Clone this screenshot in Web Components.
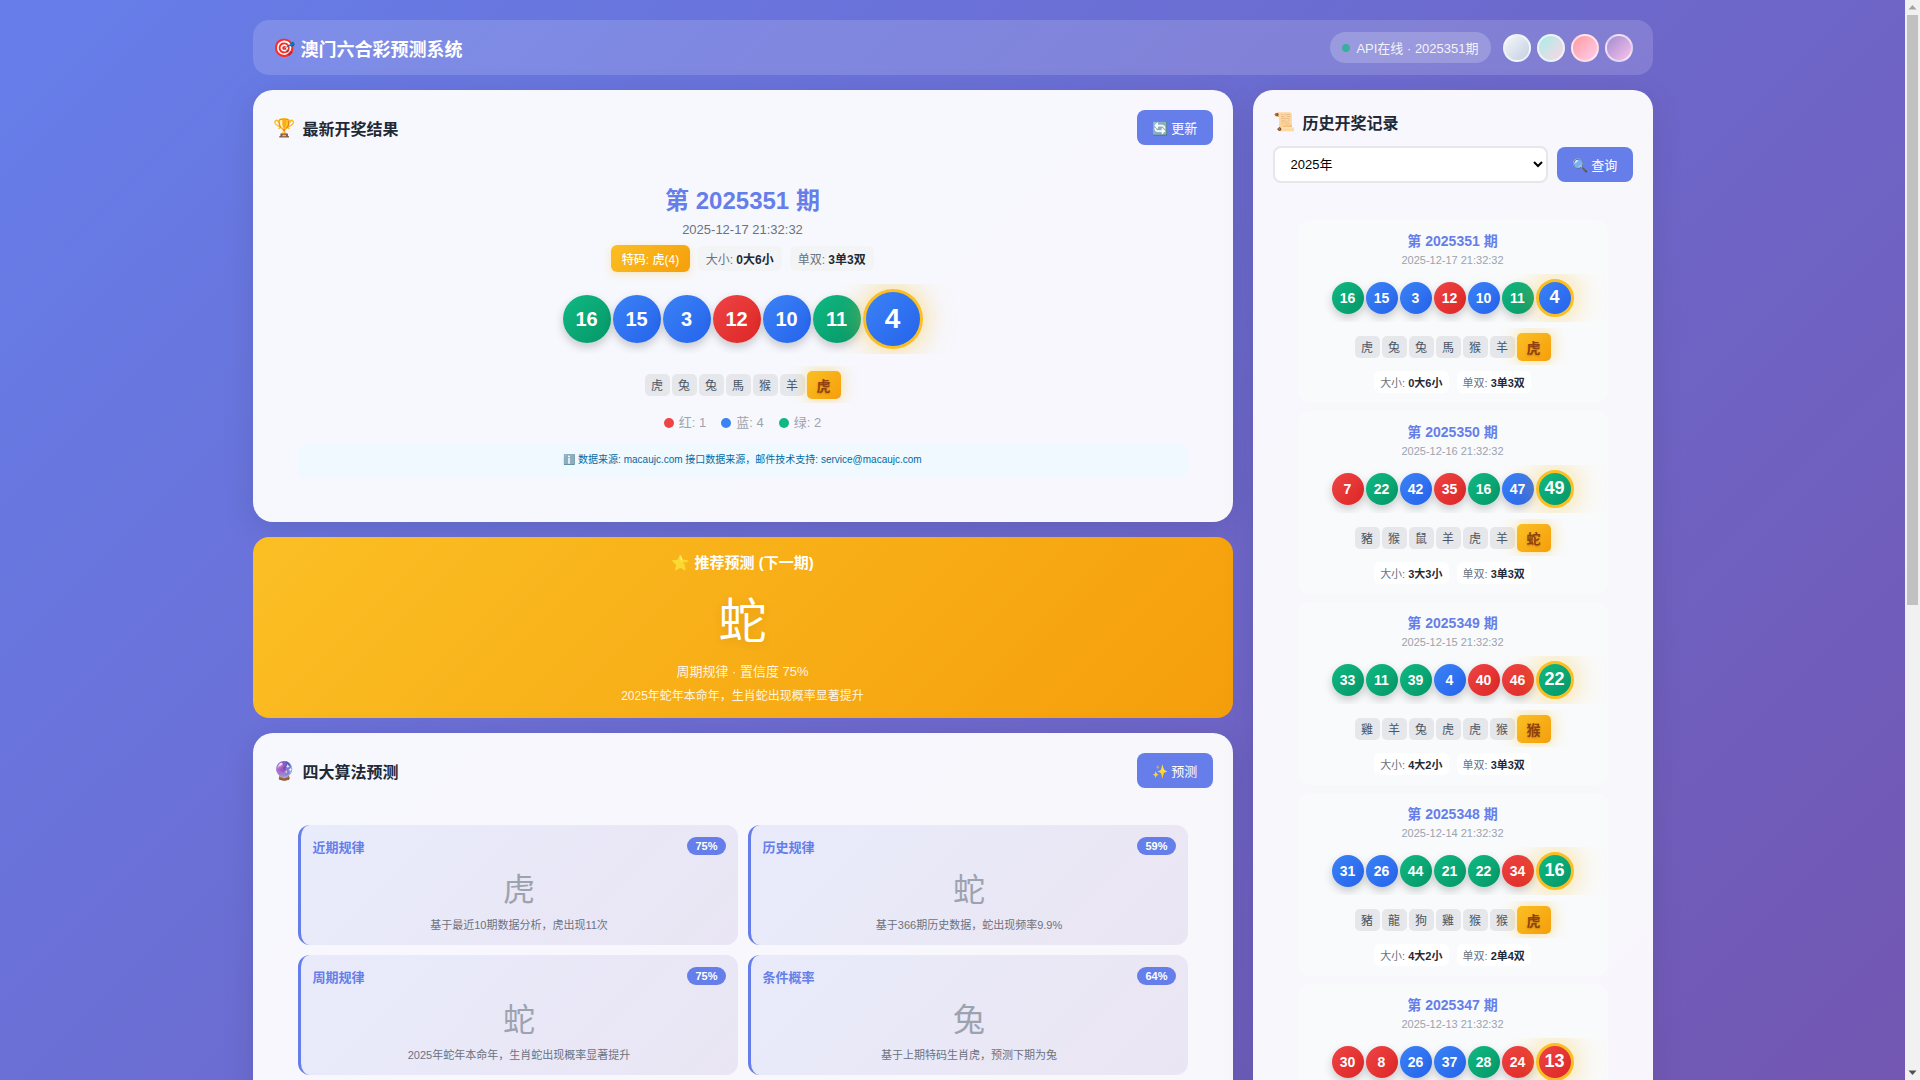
<!DOCTYPE html>
<html lang="zh-CN">
<head>
<meta charset="utf-8">
<title>澳门六合彩预测系统</title>
<style>
  html, body { margin: 0; padding: 0; }
  body {
    /* full document height, the gradient runs over all of it */
    box-sizing: border-box;
    min-height: 1921px;
    padding-right: 15px;
    background: linear-gradient(135deg, #667eea 0%, #764ba2 100%);
    font-family: "Liberation Sans", "Noto Sans CJK SC", sans-serif;
    color: #1f2937;
  }
</style>
</head>
<body>
<lotto-app></lotto-app>
<page-scrollbar></page-scrollbar>

<script>
const RED = [1, 2, 7, 8, 12, 13, 18, 19, 23, 24, 29, 30, 34, 35, 40, 45, 46];
const BLUE = [3, 4, 9, 10, 14, 15, 20, 25, 26, 31, 36, 37, 41, 42, 47, 48];
const waveOf = (n) => (RED.includes(n) ? "red" : BLUE.includes(n) ? "blue" : "green");

const DRAWS = [
  { issue: "2025351", date: "2025-12-17 21:32:32", nums: [16, 15, 3, 12, 10, 11, 4], zodiac: "虎兔兔馬猴羊虎", big: "0大6小", odd: "3单3双" },
  { issue: "2025350", date: "2025-12-16 21:32:32", nums: [7, 22, 42, 35, 16, 47, 49], zodiac: "豬猴鼠羊虎羊蛇", big: "3大3小", odd: "3单3双" },
  { issue: "2025349", date: "2025-12-15 21:32:32", nums: [33, 11, 39, 4, 40, 46, 22], zodiac: "雞羊兔虎虎猴猴", big: "4大2小", odd: "3单3双" },
  { issue: "2025348", date: "2025-12-14 21:32:32", nums: [31, 26, 44, 21, 22, 34, 16], zodiac: "豬龍狗雞猴猴虎", big: "4大2小", odd: "2单4双" },
  { issue: "2025347", date: "2025-12-13 21:32:32", nums: [30, 8, 26, 37, 28, 24, 13], zodiac: "鼠狗龍蛇虎馬蛇", big: "4大2小", odd: "1单5双" },
];

const ballsHtml = (nums, small) =>
  nums
    .map((n, i) => `<lotto-ball wave="${waveOf(n)}" ${small ? "small" : ""} ${i === nums.length - 1 ? "special" : ""}>${n}</lotto-ball>`)
    .join("");

const tilesHtml = (zodiac) =>
  [...zodiac]
    .map((z, i) => `<zodiac-tile ${i === zodiac.length - 1 ? "special" : ""}>${z}</zodiac-tile>`)
    .join("");

// base for elements that only need a static shadow root
class ShadowElement extends HTMLElement {
  render(html) {
    this.attachShadow({ mode: "open" }).innerHTML = html;
  }
}

class LottoBall extends ShadowElement {
  connectedCallback() {
    if (this.shadowRoot) return;
    this.render(`<style>
      :host {
        box-sizing: border-box;
        display: inline-flex;
        flex: none;
        align-items: center;
        justify-content: center;
        width: 48px;
        height: 48px;
        border-radius: 50%;
        color: #fff;
        font-size: 20px;
        font-weight: 700;
        box-shadow: 0 4px 10px rgba(0, 0, 0, 0.2);
      }
      :host([wave="red"]) { background: linear-gradient(135deg, #ef4444, #dc2626); }
      :host([wave="blue"]) { background: linear-gradient(135deg, #3b82f6, #2563eb); }
      :host([wave="green"]) { background: linear-gradient(135deg, #10b981, #059669); }
      :host([small]) { width: 32px; height: 32px; font-size: 14px; }
      :host([special]) {
        width: 60px;
        height: 60px;
        font-size: 28px;
        border: 3px solid #fbbf24;
        box-shadow: 0 0 30px rgba(251, 191, 36, 0.6);
      }
      :host([special][small]) { width: 38px; height: 38px; padding-bottom: 2px; font-size: 18px; }
    </style><slot></slot>`);
  }
}

class ZodiacTile extends ShadowElement {
  connectedCallback() {
    if (this.shadowRoot) return;
    this.render(`<style>
      :host {
        display: inline-flex;
        flex: none;
        align-items: center;
        justify-content: center;
        width: 25px;
        height: 22px;
        border-radius: 5px;
        background: #e5e7eb;
        color: #4b5563;
        font-size: 12px;
      }
      :host([special]) {
        width: 34px;
        height: 28px;
        border-radius: 5px;
        background: linear-gradient(135deg, #fbbf24, #f59e0b);
        color: #92400e;
        font-size: 14px;
        font-weight: 700;
        text-shadow: 0 1px 2px rgba(0, 0, 0, 0.2);
        box-shadow: 0 0 15px rgba(251, 191, 36, 0.5);
      }
    </style><slot></slot>`);
  }
}

class StatTag extends ShadowElement {
  connectedCallback() {
    if (this.shadowRoot) return;
    const label = this.getAttribute("label");
    const value = this.getAttribute("value");
    this.render(`<style>
      :host {
        display: inline-flex;
        align-items: center;
        height: 25px;
        padding: 0 8px;
        border-radius: 6px;
        background: #f3f4f6;
        color: #6b7280;
        font-size: 12px;
        white-space: pre;
      }
      b { color: #1f2937; }
      :host([small]) { height: 22px; padding: 0 6px; background: #fff; font-size: 11px; }
    </style>${label}: <b>${value}</b>`);
  }
}

class AppHeader extends ShadowElement {
  connectedCallback() {
    this.render(`<style>
      :host {
        display: flex;
        align-items: center;
        justify-content: space-between;
        height: 55px;
        padding: 0 20px;
        border-radius: 16px;
        background: rgba(255, 255, 255, 0.15);
        color: #fff;
      }
      h1 { margin: 0; font-size: 18px; font-weight: 600; display: flex; gap: 6px; align-items: center; }
      .right { display: flex; align-items: center; }
      .status {
        display: flex;
        align-items: center;
        gap: 6px;
        height: 31px;
        padding: 0 12px;
        margin-right: 12px;
        border-radius: 16px;
        background: rgba(255, 255, 255, 0.2);
        font-size: 13px;
        color: rgba(255, 255, 255, 0.9);
      }
      .dot { width: 8px; height: 8px; border-radius: 50%; background: #10b981; opacity: 0.7; }
      .themes { display: flex; gap: 6px; }
      .themes span {
        box-sizing: border-box;
        width: 28px;
        height: 28px;
        border-radius: 50%;
        border: 2px solid rgba(255, 255, 255, 0.6);
      }
    </style>
    <h1><span>🎯</span><span>澳门六合彩预测系统</span></h1>
    <div class="right">
      <div class="status"><i class="dot"></i><span>API在线 · 2025351期</span></div>
      <div class="themes">
        <span style="background:linear-gradient(135deg,#f5f7fa,#c3cfe2)"></span>
        <span style="background:linear-gradient(135deg,#a8edea,#fed6e3)"></span>
        <span style="background:linear-gradient(135deg,#ff9a9e,#fecfef)"></span>
        <span style="background:linear-gradient(135deg,#a18cd1,#fbc2eb)"></span>
      </div>
    </div>`);
  }
}

class PanelCard extends ShadowElement {
  connectedCallback() {
    if (this.shadowRoot) return;
    const icon = this.getAttribute("icon");
    const title = this.getAttribute("heading");
    this.render(`<style>
      :host {
        display: block;
        box-sizing: border-box;
        padding: 20px;
        border-radius: 20px;
        background: rgba(255, 255, 255, 0.95);
        box-shadow: 0 8px 32px rgba(0, 0, 0, 0.1);
      }
      .head { display: flex; align-items: center; justify-content: space-between; min-height: 35px; }
      :host([compact]) .head { min-height: 23px; }
      h2 { margin: 0; font-size: 16px; font-weight: 600; display: flex; align-items: center; gap: 8px; color: #1f2937; }
      .icon { font-size: 18px; }
    </style>
    <div class="head">
      <h2><span class="icon">${icon}</span><span>${title}</span></h2>
      <slot name="action"></slot>
    </div>
    <slot></slot>`);
  }
}

class PrimaryButton extends ShadowElement {
  connectedCallback() {
    if (this.shadowRoot) return;
    this.render(`<style>
      :host { display: inline-block; flex: none; }
      button {
        box-sizing: border-box;
        width: 76px;
        height: 35px;
        padding: 0;
        border: 0;
        border-radius: 8px;
        background: #667eea;
        color: #fff;
        font: 13px "Liberation Sans", "Noto Sans CJK SC", sans-serif;
        cursor: pointer;
      }
    </style><button><slot></slot></button>`);
  }
}

class LatestDraw extends ShadowElement {
  connectedCallback() {
    const d = DRAWS[0];
    this.render(`<style>
      :host { display: block; padding: 41px 25px 24px; text-align: center; }
      .issue { font-size: 24px; line-height: 30px; font-weight: 700; color: #667eea; }
      .date { margin-top: 5px; font-size: 13px; line-height: 18px; color: #6b7280; }
      .tags { display: flex; justify-content: center; align-items: center; gap: 8px; margin-top: 6px; height: 27px; }
      .sp {
        display: inline-flex;
        align-items: center;
        height: 27px;
        padding: 0 10.5px;
        border-radius: 6px;
        background: linear-gradient(135deg, #fbbf24, #f59e0b);
        box-shadow: 0 2px 8px rgba(251, 191, 36, 0.3);
        color: #fff;
        font-size: 12px;
        font-weight: 500;
      }
      .balls { display: flex; justify-content: center; align-items: center; gap: 2px; height: 70px; margin-top: 12px; overflow: hidden; }
      .tiles { display: flex; justify-content: center; align-items: center; gap: 2px; height: 37px; margin-top: 12px; overflow: hidden; }
      .legend { display: flex; justify-content: center; gap: 15px; margin-top: 11px; font-size: 13px; line-height: 18px; color: #9ca3af; }
      .legend span { display: flex; align-items: center; gap: 5px; }
      .legend i { width: 10px; height: 10px; border-radius: 50%; }
      .note {
        display: flex;
        align-items: center;
        justify-content: center;
        box-sizing: border-box;
        height: 35px;
        padding-bottom: 4px;
        margin-top: 11px;
        border-radius: 8px;
        background: #f0f9ff;
        color: #0369a1;
        font-size: 10px;
      }
    </style>
    <div class="issue">第 ${d.issue} 期</div>
    <div class="date">${d.date}</div>
    <div class="tags">
      <span class="sp">特码: 虎(4)</span>
      <stat-tag label="大小" value="${d.big}"></stat-tag>
      <stat-tag label="单双" value="${d.odd}"></stat-tag>
    </div>
    <div class="balls">${ballsHtml(d.nums)}</div>
    <div class="tiles">${tilesHtml(d.zodiac)}</div>
    <div class="legend">
      <span><i style="background:#ef4444"></i>红: 1</span>
      <span><i style="background:#3b82f6"></i>蓝: 4</span>
      <span><i style="background:#10b981"></i>绿: 2</span>
    </div>
    <div class="note">ℹ️ 数据来源: macaujc.com 接口数据来源，邮件技术支持: service@macaujc.com</div>`);
  }
}

class RecommendCard extends ShadowElement {
  connectedCallback() {
    this.render(`<style>
      :host {
        display: block;
        box-sizing: border-box;
        height: 181px;
        padding-top: 16px;
        border-radius: 16px;
        background: linear-gradient(135deg, #fbbf24, #f59e0b);
        color: #fff;
        text-align: center;
      }
      .title { font-size: 15px; line-height: 20px; font-weight: 600; }
      .big { margin-top: 14px; font-size: 48px; line-height: 70px; text-shadow: 0 2px 10px rgba(0, 0, 0, 0.1); }
      .why { margin-top: 6px; font-size: 13px; line-height: 18px; color: rgba(255, 255, 255, 0.9); }
      .desc { margin-top: 7px; font-size: 12px; line-height: 17px; color: rgba(255, 255, 255, 0.9); }
    </style>
    <div class="title">⭐ 推荐预测 (下一期)</div>
    <div class="big">蛇</div>
    <div class="why">周期规律 · 置信度 75%</div>
    <div class="desc">2025年蛇年本命年，生肖蛇出现概率显著提升</div>`);
  }
}

class AlgoCard extends ShadowElement {
  connectedCallback() {
    if (this.shadowRoot) return;
    const name = this.getAttribute("name");
    const score = this.getAttribute("score");
    const pick = this.getAttribute("pick");
    const desc = this.getAttribute("desc");
    this.render(`<style>
      :host {
        display: block;
        box-sizing: border-box;
        height: 120px;
        padding: 11px 12px 0;
        border-left: 3px solid #667eea;
        border-radius: 12px;
        background: linear-gradient(135deg, rgba(102, 126, 234, 0.1), rgba(118, 75, 162, 0.1));
        text-align: center;
      }
      .top { display: flex; justify-content: space-between; align-items: center; height: 20px; }
      .name { font-size: 13px; font-weight: 700; color: #667eea; }
      .score { padding: 0 8px; height: 18px; line-height: 18px; border-radius: 10px; background: #667eea; color: #fff; font-size: 11px; font-weight: 700; }
      .pick { margin-top: 11px; font-size: 32px; line-height: 46px; color: #9ca3af; }
      .desc { margin-top: 4px; font-size: 11px; line-height: 16px; color: #6b7280; }
    </style>
    <div class="top"><span class="name">${name}</span><span class="score">${score}</span></div>
    <div class="pick">${pick}</div>
    <div class="desc">${desc}</div>`);
  }
}

class HistoryItem extends ShadowElement {
  connectedCallback() {
    const d = this.draw;
    this.render(`<style>
      :host {
        display: block;
        box-sizing: border-box;
        height: 183px;
        padding-top: 11px;
        border-radius: 12px;
        background: #f9fafb;
        text-align: center;
      }
      .issue { font-size: 14px; line-height: 20px; font-weight: 700; color: #667eea; }
      .date { font-size: 11px; line-height: 16px; margin-top: 1px; color: #9ca3af; }
      .balls { display: flex; justify-content: center; align-items: center; gap: 2px; height: 48px; margin-top: 6px; overflow: hidden; }
      .tiles { display: flex; justify-content: center; align-items: center; gap: 2px; height: 37px; margin-top: 6px; overflow: hidden; }
      .stats { display: flex; justify-content: center; gap: 8px; margin-top: 6px; }
    </style>
    <div class="issue">第 ${d.issue} 期</div>
    <div class="date">${d.date}</div>
    <div class="balls">${ballsHtml(d.nums, true)}</div>
    <div class="tiles">${tilesHtml(d.zodiac)}</div>
    <div class="stats">
      <stat-tag small label="大小" value="${d.big}"></stat-tag>
      <stat-tag small label="单双" value="${d.odd}"></stat-tag>
    </div>`);
  }
}

class HistoryPanel extends ShadowElement {
  connectedCallback() {
    this.render(`<style>
      :host { display: block; }
      .query { display: flex; align-items: center; gap: 9px; margin-top: 12px; }
      select {
        box-sizing: border-box;
        flex: 1;
        min-width: 0;
        height: 37px;
        padding: 0 12px;
        border: 2px solid #e5e7eb;
        border-radius: 8px;
        background: #fff;
        color: #000;
        font: 13px "Liberation Sans", "Noto Sans CJK SC", sans-serif;
      }
      .list { display: flex; flex-direction: column; gap: 8px; padding: 37px 25px 0; }
    </style>
    <div class="query">
      <select><option>2025年</option><option>2024年</option></select>
      <primary-button>🔍 查询</primary-button>
    </div>
    <div class="list"></div>`);
    const list = this.shadowRoot.querySelector(".list");
    DRAWS.forEach((d) => {
      const item = document.createElement("history-item");
      item.draw = d;
      list.appendChild(item);
    });
  }
}

// the browser's own bar does not show in the photograph, so it is drawn over the page edge
class PageScrollbar extends ShadowElement {
  connectedCallback() {
    this.render(`<style>
      :host { position: fixed; top: 0; right: 0; bottom: 0; width: 15px; background: #f1f1f1; }
      .thumb { position: absolute; top: 15px; left: 2px; width: 11px; height: 590px; background: #c1c1c1; }
      svg { position: absolute; left: 0; width: 15px; height: 15px; }
    </style>
    <svg style="top:0" viewBox="0 0 15 15"><polygon points="7.5,5 11.5,9.5 3.5,9.5" fill="#a3a3a3"/></svg>
    <div class="thumb"></div>
    <svg style="bottom:0" viewBox="0 0 15 15"><polygon points="3.5,5.5 11.5,5.5 7.5,10" fill="#505050"/></svg>`);
  }
}

class LottoApp extends ShadowElement {
  connectedCallback() {
    this.render(`<style>
      :host { display: block; box-sizing: border-box; width: 1400px; margin: 0 auto; padding-top: 20px; }
      .main { display: grid; grid-template-columns: 1fr 400px; gap: 20px; margin-top: 15px; align-items: start; }
      .left { display: flex; flex-direction: column; gap: 15px; min-width: 0; }
      .grid { display: grid; grid-template-columns: 1fr 1fr; gap: 10px; padding: 37px 25px 25px; }
    </style>
    <app-header></app-header>
    <div class="main">
      <div class="left">
        <panel-card icon="🏆" heading="最新开奖结果">
          <primary-button slot="action">🔄 更新</primary-button>
          <latest-draw></latest-draw>
        </panel-card>
        <recommend-card></recommend-card>
        <panel-card icon="🔮" heading="四大算法预测">
          <primary-button slot="action">✨ 预测</primary-button>
          <div class="grid">
            <algo-card name="近期规律" score="75%" pick="虎" desc="基于最近10期数据分析，虎出现11次"></algo-card>
            <algo-card name="历史规律" score="59%" pick="蛇" desc="基于366期历史数据，蛇出现频率9.9%"></algo-card>
            <algo-card name="周期规律" score="75%" pick="蛇" desc="2025年蛇年本命年，生肖蛇出现概率显著提升"></algo-card>
            <algo-card name="条件概率" score="64%" pick="兔" desc="基于上期特码生肖虎，预测下期为兔"></algo-card>
          </div>
        </panel-card>
      </div>
      <panel-card compact icon="📜" heading="历史开奖记录">
        <history-panel></history-panel>
      </panel-card>
    </div>`);
  }
}

customElements.define("lotto-ball", LottoBall);
customElements.define("zodiac-tile", ZodiacTile);
customElements.define("stat-tag", StatTag);
customElements.define("app-header", AppHeader);
customElements.define("panel-card", PanelCard);
customElements.define("primary-button", PrimaryButton);
customElements.define("latest-draw", LatestDraw);
customElements.define("recommend-card", RecommendCard);
customElements.define("algo-card", AlgoCard);
customElements.define("history-item", HistoryItem);
customElements.define("history-panel", HistoryPanel);
customElements.define("page-scrollbar", PageScrollbar);
customElements.define("lotto-app", LottoApp);
</script>
</body>
</html>
